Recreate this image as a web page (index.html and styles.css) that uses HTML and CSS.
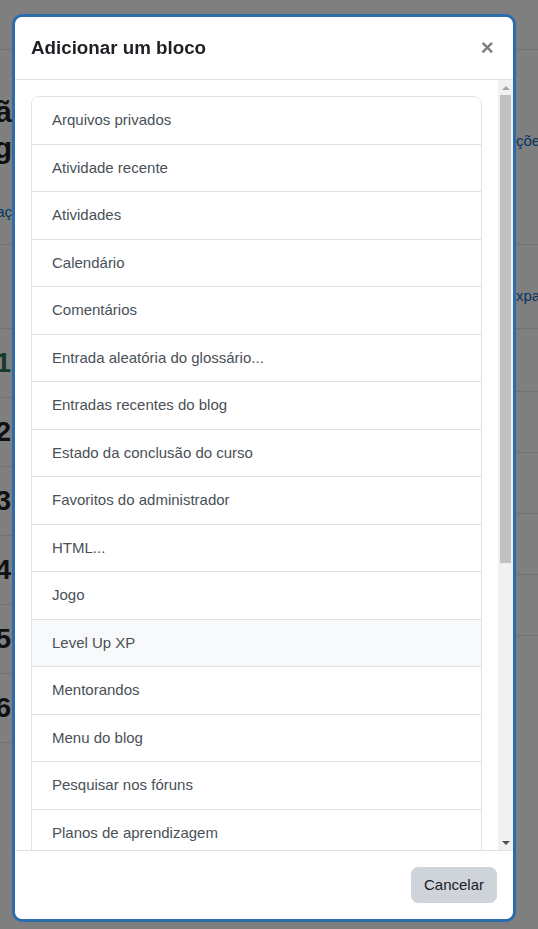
FILE: index.html
```html
<!DOCTYPE html>
<html lang="pt">
<head>
<meta charset="utf-8">
<title>Adicionar um bloco</title>
<link rel="stylesheet" href="styles.css">
</head>
<body>
<div class="page">
  <div class="strip strip-left">
    <div class="nav"></div>
    <div class="hdr">
      <div class="end h1">Configuraçã</div>
      <div class="end h1">Bloco de aprendizag</div>
      <div class="end link lk">Administraç</div>
    </div>
    <div class="gap"></div>
    <div class="row"><span class="num num-first">1</span></div>
    <div class="row"><span class="num">2</span></div>
    <div class="row"><span class="num">3</span></div>
    <div class="row"><span class="num">4</span></div>
    <div class="row"><span class="num">5</span></div>
    <div class="row"><span class="num">6</span></div>
  </div>
  <div class="middle"></div>
  <div class="strip strip-right">
    <div class="nav"></div>
    <div class="hdr hdr-right"><span class="link">ções</span></div>
    <div class="gap gap-right"><span class="link">xpa</span></div>
    <div class="rrow rrow-first"></div>
    <div class="rrow"></div>
    <div class="rrow"></div>
    <div class="rrow"></div>
    <div class="rrow"></div>
  </div>
</div>

<div class="backdrop"></div>

<div class="modal" role="dialog" aria-labelledby="modal-title">
  <div class="modal-header">
    <h5 class="modal-title" id="modal-title">Adicionar um bloco</h5>
    <button class="close" type="button" aria-label="Fechar">×</button>
  </div>
  <div class="modal-body">
    <div class="scroll-content">
      <div class="list-group">
        <a class="item">Arquivos privados</a>
        <a class="item">Atividade recente</a>
        <a class="item">Atividades</a>
        <a class="item">Calendário</a>
        <a class="item">Comentários</a>
        <a class="item">Entrada aleatória do glossário...</a>
        <a class="item">Entradas recentes do blog</a>
        <a class="item">Estado da conclusão do curso</a>
        <a class="item">Favoritos do administrador</a>
        <a class="item">HTML...</a>
        <a class="item">Jogo</a>
        <a class="item item-hover">Level Up XP</a>
        <a class="item">Mentorandos</a>
        <a class="item">Menu do blog</a>
        <a class="item">Pesquisar nos fóruns</a>
        <a class="item">Planos de aprendizagem</a>
        <a class="item">Próximos eventos</a>
        <a class="item">Rede social</a>
        <a class="item">Resultados da atividade</a>
        <a class="item">RSS remoto</a>
        <a class="item">Seções</a>
        <a class="item">Tags</a>
        <a class="item">Tags do blog</a>
        <a class="item">Últimas notícias</a>
        <a class="item">Usuários online</a>
      </div>
    </div>
    <div class="scrollbar" aria-hidden="true">
      <div class="sb-btn">
        <svg width="8" height="4" viewBox="0 0 8 4"><polygon points="4,0 8,4 0,4" fill="#a3a3a3"/></svg>
      </div>
      <div class="sb-thumb"></div>
      <div class="sb-space"></div>
      <div class="sb-btn">
        <svg width="8" height="4" viewBox="0 0 8 4"><polygon points="0,0 8,0 4,4" fill="#505050"/></svg>
      </div>
    </div>
  </div>
  <div class="modal-footer">
    <button class="btn-cancel" type="button">Cancelar</button>
  </div>
</div>
</body>
</html>
```

FILE: styles.css
```css
html, body {
  margin: 0;
  padding: 0;
}
body {
  font-family: "Liberation Sans", Arial, sans-serif;
  color: #1d2125;
  background: #fff;
  overflow: hidden;
}

/* background page (mostly hidden behind the dialog) */
.page {
  display: grid;
  grid-template-columns: 12px 1fr 22px;
  height: 929px;
  overflow: hidden;
}
.strip {
  display: flex;
  flex-direction: column;
  overflow: hidden;
  white-space: nowrap;
}
.nav {
  height: 50px;
  box-sizing: border-box;
  border-bottom: 1px solid #dee2e6;
  flex: none;
}
.hdr {
  height: 195px;
  box-sizing: border-box;
  padding-top: 44px;
  border-bottom: 1px solid #dee2e6;
  flex: none;
}
.end {
  display: flex;
  justify-content: flex-end;
}
.h1 {
  font-size: 30px;
  font-weight: 700;
  line-height: 36px;
}
.link {
  color: #0f6cbf;
  font-size: 15px;
  line-height: 22.5px;
}
.lk {
  margin-top: 35px;
}
.gap {
  height: 84px;
  box-sizing: border-box;
  border-bottom: 1px solid #dee2e6;
  flex: none;
}
.row {
  height: 69px;
  box-sizing: border-box;
  padding-right: 1px;
  border-bottom: 1px solid #dee2e6;
  display: flex;
  align-items: center;
  justify-content: flex-end;
  flex: none;
}
.num {
  font-size: 28px;
  font-weight: 700;
}
.num-first {
  color: #2f6f5f;
}
.hdr-right {
  padding-top: 80px;
}
.gap-right {
  padding-top: 40px;
}
.rrow {
  height: 61px;
  box-sizing: border-box;
  border-bottom: 1px solid #dee2e6;
  flex: none;
}
.rrow-first {
  height: 63px;
}

/* backdrop */
.backdrop {
  position: fixed;
  inset: 0;
  background: rgba(0, 0, 0, 0.5);
}

/* dialog */
.modal {
  position: fixed;
  top: 14px;
  left: 12px;
  width: 504px;
  height: 908px;
  box-sizing: border-box;
  border: 3px solid #2c6cad;
  border-radius: 10px;
  background: #fff;
  display: flex;
  flex-direction: column;
  overflow: hidden;
}
.modal-header {
  flex: none;
  height: 63px;
  box-sizing: border-box;
  padding: 0 16px;
  border-bottom: 1px solid #dee2e6;
  display: flex;
  align-items: center;
  justify-content: space-between;
}
.modal-title {
  margin: 0;
  font-size: 18.75px;
  font-weight: 700;
  line-height: 1.2;
  color: #1d2125;
}
.close {
  border: 0;
  background: transparent;
  padding: 0;
  margin: 0 3px 0 0;
  font-family: "Liberation Sans", Arial, sans-serif;
  font-size: 22.5px;
  font-weight: 700;
  line-height: 1;
  color: #000;
  opacity: 0.5;
}
.modal-body {
  flex: 1;
  min-height: 0;
  display: flex;
}
.scroll-content {
  flex: 1;
  min-width: 0;
  overflow: hidden;
  padding: 16px 16px 0;
}
.scrollbar {
  flex: none;
  width: 15px;
  background: #f1f1f1;
  display: flex;
  flex-direction: column;
}
.sb-btn {
  flex: none;
  height: 15px;
  display: flex;
  align-items: center;
  justify-content: center;
}
.sb-btn svg {
  display: block;
}
.sb-thumb {
  flex: none;
  height: 468px;
  margin: 0 2px;
  background: #c1c1c1;
}
.sb-space {
  flex: 1;
}
.list-group {
  display: flex;
  flex-direction: column;
  border: 1px solid #dee2e6;
  border-radius: 8px;
  overflow: hidden;
}
.item {
  display: block;
  padding: 12px 20px;
  font-size: 15px;
  line-height: 22.5px;
  color: #495057;
  text-decoration: none;
  background: #fff;
  border-top: 1px solid #dee2e6;
}
.item:first-child {
  border-top: 0;
}
.item-hover {
  background: #f8f9fa;
}
.modal-footer {
  flex: none;
  height: 69px;
  box-sizing: border-box;
  padding: 0 16px;
  border-top: 1px solid #dee2e6;
  display: flex;
  align-items: center;
  justify-content: flex-end;
}
.btn-cancel {
  font-family: "Liberation Sans", Arial, sans-serif;
  font-size: 15px;
  line-height: 22.5px;
  padding: 6px 12px;
  border: 1px solid #ced4da;
  border-radius: 7px;
  background: #ced4da;
  color: #1d2125;
}
```
